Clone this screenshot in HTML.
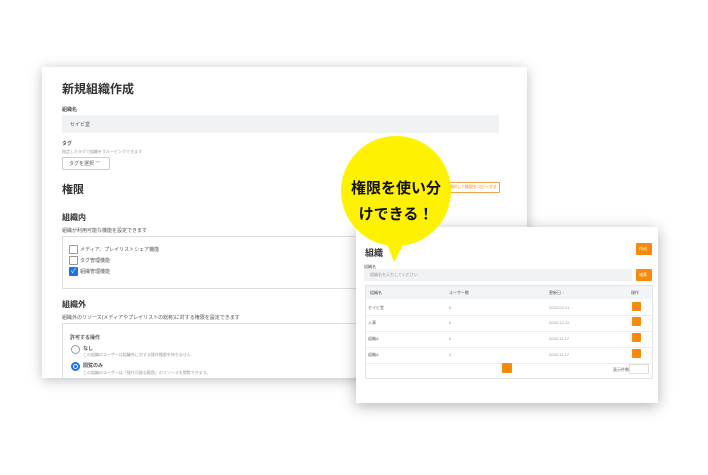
<!DOCTYPE html><html><head><meta charset="utf-8"><style>
body{margin:0;width:708px;height:475px;background:#fff;position:relative;overflow:hidden;font-family:"Liberation Sans","Noto Sans CJK JP",sans-serif;color:#333}
.a{position:absolute}
.back{left:42px;top:67px;width:485px;height:311px;background:#fff;box-shadow:0 2px 12px rgba(0,0,0,.25);overflow:hidden}
.front{left:356px;top:227px;width:302px;height:176px;background:#fff;box-shadow:0 3px 14px rgba(0,0,0,.3)}
.s{font-size:5px;color:#555;white-space:nowrap}
.t{font-size:4px;color:#999;white-space:nowrap}
.cb{width:7px;height:7px;border:1px solid #999;background:#fff;border-radius:1px}
.org{background:#f7890c;border-radius:1px}
</style></head><body>
<div class="a back">
 <div class="a" style="left:20px;top:13px;font-size:12px;font-weight:bold;color:#333">新規組織作成</div>
 <div class="a s" style="left:20px;top:39px;font-weight:bold">組織名</div>
 <div class="a" style="left:20px;top:48px;width:437px;height:18px;background:#f1f2f4"></div>
 <div class="a s" style="left:28px;top:54px">セイビ堂</div>
 <div class="a s" style="left:20px;top:73px;font-weight:bold">タグ</div>
 <div class="a t" style="left:20px;top:82px">指定したタグで組織をグルーピングできます</div>
 <div class="a" style="left:20px;top:90px;width:46px;height:11px;border:1px solid #ccc;border-radius:2px"></div>
 <div class="a s" style="left:27px;top:93px">タグを選択 ﹀</div>
 <div class="a" style="left:20px;top:114px;font-size:11px;font-weight:bold">権限</div>
 <div class="a" style="left:403px;top:115px;width:53px;height:9px;border:1px solid #f7a04a;border-radius:1px"></div>
 <div class="a" style="left:407px;top:117px;font-size:4px;color:#f7890c;white-space:nowrap">選択して権限をコピーする</div>
 <div class="a" style="left:20px;top:145px;font-size:8px;font-weight:bold">組織内</div>
 <div class="a s" style="left:20px;top:160px">組織が利用可能な機能を設定できます</div>
 <div class="a" style="left:20px;top:169px;width:440px;height:51px;border:1px solid #ddd"></div>
 <div class="a cb" style="left:27px;top:178px"></div><div class="a s" style="left:38px;top:179px">メディア、プレイリストシェア機能</div>
 <div class="a cb" style="left:27px;top:189px"></div><div class="a s" style="left:38px;top:190px">タグ管理機能</div>
 <div class="a cb" style="left:27px;top:200px;background:#1a73e8;border-color:#1a73e8;color:#fff;font-size:7px;line-height:7px;text-align:center">✓</div><div class="a s" style="left:38px;top:201px">組織管理機能</div>
 <div class="a" style="left:20px;top:232px;font-size:8px;font-weight:bold">組織外</div>
 <div class="a s" style="left:20px;top:247px">組織外のリソース(メディアやプレイリストの総称)に対する権限を設定できます</div>
 <div class="a" style="left:20px;top:256px;width:450px;height:70px;border:1px solid #ddd"></div>
 <div class="a s" style="left:28px;top:267px;font-weight:bold">許可する操作</div>
 <div class="a" style="left:29px;top:278px;width:7px;height:7px;border:1px solid #999;border-radius:50%"></div>
 <div class="a s" style="left:41px;top:278px;font-weight:bold">なし</div>
 <div class="a t" style="left:41px;top:285px">この組織のユーザーは組織外に対する操作権限を持ちません</div>
 <div class="a" style="left:29px;top:295px;width:5px;height:5px;border:2px solid #1a73e8;border-radius:50%;background:radial-gradient(#1a73e8 40%,#fff 45%)"></div>
 <div class="a s" style="left:41px;top:295px;font-weight:bold">閲覧のみ</div>
 <div class="a t" style="left:41px;top:303px">この組織のユーザーは「操作可能な範囲」のリソースを閲覧できます。</div>
</div>
<div class="a front">
 <div class="a" style="left:9px;top:19px;font-size:9px;font-weight:bold">組織</div>
 <div class="a org" style="left:280px;top:16px;width:16px;height:12px"></div>
 <div class="a" style="left:283px;top:19px;font-size:4px;color:#fff">作成</div>
 <div class="a t" style="left:8px;top:37px;color:#555">組織名</div>
 <div class="a" style="left:8px;top:42px;width:268px;height:12px;background:#f1f2f4"></div>
 <div class="a t" style="left:14px;top:45px">組織名を入力してください</div>
 <div class="a org" style="left:280px;top:42px;width:16px;height:12px"></div>
 <div class="a" style="left:283px;top:45px;font-size:4px;color:#fff">検索</div>
 <div class="a" style="left:9px;top:58px;width:286px;height:92px;border:1px solid #e2e4e8"></div>
 <div class="a" style="left:10px;top:59px;width:286px;height:13px;background:#f3f4f6"></div>
 <div class="a t" style="left:14px;top:63px;color:#555">組織名</div><div class="a t" style="left:93px;top:63px;color:#555">ユーザー数</div><div class="a t" style="left:193px;top:63px;color:#555">更新日 <span style="color:#f7890c">↓</span></div><div class="a t" style="left:275px;top:63px;color:#555">操作</div>
 <div class="a" style="left:10px;top:88px;width:286px;height:1px;background:#eee"></div>
 <div class="a" style="left:10px;top:104px;width:286px;height:1px;background:#eee"></div>
 <div class="a" style="left:10px;top:120px;width:286px;height:1px;background:#eee"></div>
 <div class="a" style="left:10px;top:136px;width:286px;height:1px;background:#eee"></div>
 <div class="a t" style="left:12px;top:78px;color:#666">セイビ堂</div><div class="a t" style="left:93px;top:78px">6</div><div class="a t" style="left:193px;top:78px">2023-02-21</div><div class="a org" style="left:276px;top:75px;width:9px;height:9px"></div>
 <div class="a t" style="left:12px;top:93px;color:#666">人事</div><div class="a t" style="left:93px;top:93px">6</div><div class="a t" style="left:193px;top:93px">2023-12-22</div><div class="a org" style="left:276px;top:90px;width:9px;height:9px"></div>
 <div class="a t" style="left:12px;top:109px;color:#666">組織A</div><div class="a t" style="left:93px;top:109px">6</div><div class="a t" style="left:193px;top:109px">2023-11-17</div><div class="a org" style="left:276px;top:106px;width:9px;height:9px"></div>
 <div class="a t" style="left:12px;top:125px;color:#666">組織A</div><div class="a t" style="left:93px;top:125px">3</div><div class="a t" style="left:193px;top:125px">2023-11-17</div><div class="a org" style="left:276px;top:122px;width:9px;height:9px"></div>
 <div class="a org" style="left:146px;top:136px;width:10px;height:10px"></div>
 <div class="a t" style="left:257px;top:140px;color:#666">表示件数</div>
 <div class="a" style="left:273px;top:137px;width:18px;height:8px;border:1px solid #ddd"></div>
</div>
<svg class="a" style="left:0;top:0" width="708" height="475"><circle cx="396" cy="191" r="55" fill="#fff200"/><polygon points="384,236 408,236 394,262" fill="#fff200"/></svg>
<div class="a" style="left:339px;top:176px;width:114px;font-size:15px;font-weight:bold;color:#111;text-align:center;line-height:26px">権限を使い分<br>けできる！</div>
</body></html>
